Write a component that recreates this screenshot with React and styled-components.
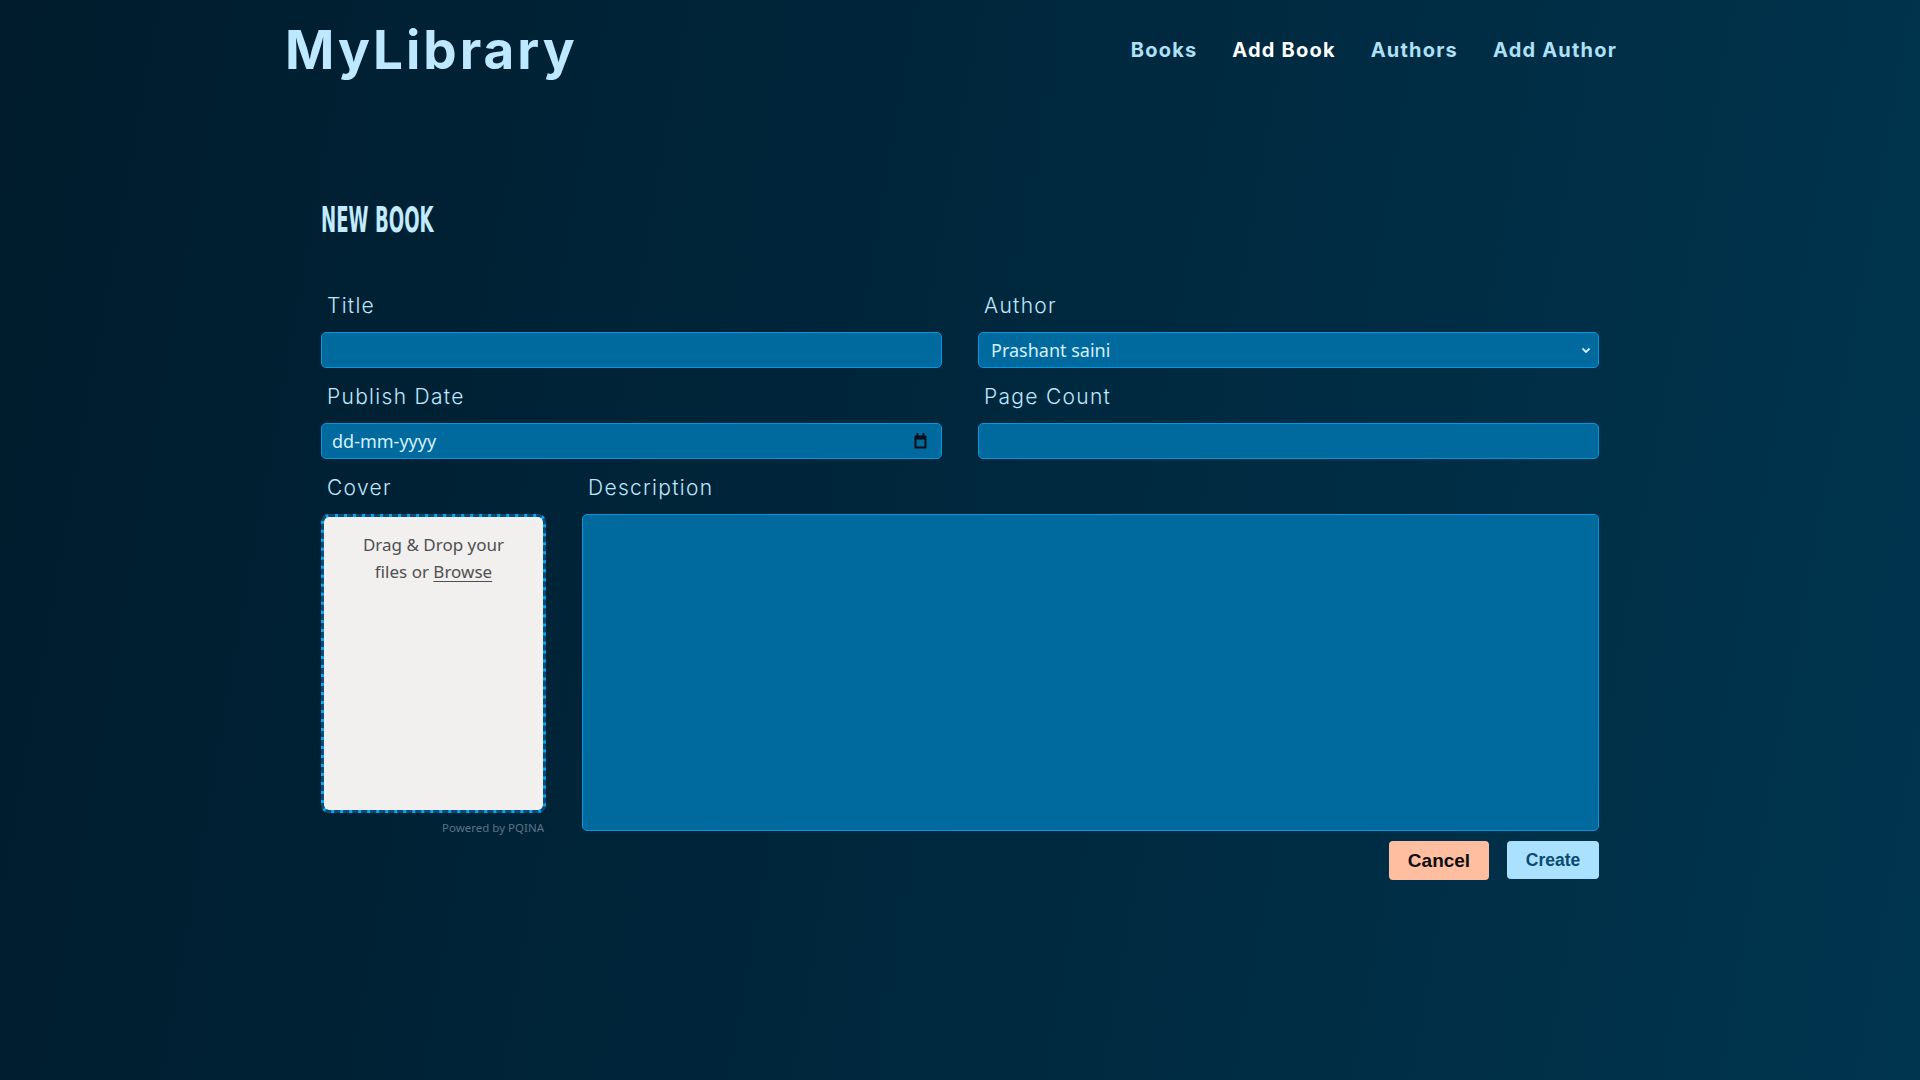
import React from 'react'
import styled, { createGlobalStyle } from 'styled-components'

const GlobalStyle = createGlobalStyle`
    * {
        box-sizing: border-box;
    }
    body {
        margin: 0;
        min-height: 100vh;
        background: linear-gradient(100deg, #001c2d 0%, #00263b 45%, #00354f 100%);
        font-family: Inter, 'Noto Sans', sans-serif;
    }
`

const authors = ['Prashant saini']

const App = () => {
    return (
        <>
            <GlobalStyle />
            <Header>
                <Logo>MyLibrary</Logo>
                <Nav>
                    <NavLink>Books</NavLink>
                    <NavLink active>Add Book</NavLink>
                    <NavLink>Authors</NavLink>
                    <NavLink>Add Author</NavLink>
                </Nav>
            </Header>
            <Main>
                <PageTitle>
                    <span>New Book</span>
                </PageTitle>
                <Form onSubmit={(e) => e.preventDefault()}>
                    <Row>
                        <Field>
                            <Label>Title</Label>
                            <Input type="text" />
                        </Field>
                        <Field>
                            <Label>Author</Label>
                            <InputBox>
                                <Select defaultValue={authors[0]}>
                                    {authors.map((a) => (
                                        <option key={a}>{a}</option>
                                    ))}
                                </Select>
                                <svg width="10" height="7" viewBox="0 0 10 7">
                                    <path
                                        d="M1.5 1.5 L5 5 L8.5 1.5"
                                        fill="none"
                                        stroke="#d6f0ff"
                                        strokeWidth="1.8"
                                    />
                                </svg>
                            </InputBox>
                        </Field>
                    </Row>
                    <Row>
                        <Field>
                            <Label>Publish Date</Label>
                            <InputBox calendar>
                                <BareInput type="text" placeholder="dd-mm-yyyy" />
                                <svg width="13" height="16" viewBox="0 0 13 16">
                                    <rect x="0.5" y="2.5" width="12" height="13" rx="1" fill="#0b0f14" />
                                    <rect x="2.5" y="6.5" width="8" height="7" fill="#00699e" />
                                    <rect x="2.6" y="0" width="1.8" height="3.5" fill="#0b0f14" />
                                    <rect x="8.6" y="0" width="1.8" height="3.5" fill="#0b0f14" />
                                </svg>
                            </InputBox>
                        </Field>
                        <Field>
                            <Label>Page Count</Label>
                            <Input type="number" />
                        </Field>
                    </Row>
                    <CoverRow>
                        <Field>
                            <Label>Cover</Label>
                            <DropZone>
                                <DropLine>Drag &amp; Drop your</DropLine>
                                <DropLine>
                                    files or <Browse>Browse</Browse>
                                </DropLine>
                            </DropZone>
                            <Credit>Powered by PQINA</Credit>
                        </Field>
                        <Field>
                            <Label>Description</Label>
                            <TextArea />
                            <Actions>
                                <Button cancel>Cancel</Button>
                                <Button>Create</Button>
                            </Actions>
                        </Field>
                    </CoverRow>
                </Form>
            </Main>
        </>
    )
}

const Header = styled.header`
    max-width: 1350px;
    height: 100px;
    margin: 0 auto;
    padding-right: 18px;
    display: flex;
    align-items: center;
    justify-content: space-between;
`

const Logo = styled.h1`
    margin: 0;
    font-family: Inter, 'Noto Sans', sans-serif;
    font-size: 53px;
    font-weight: 700;
    letter-spacing: 3px;
    color: #bde8ff;
`

const Nav = styled.nav`
    display: flex;
    gap: 35px;
`

const NavLink = styled.a`
    font-family: Inter, 'Noto Sans', sans-serif;
    font-size: 20px;
    font-weight: 700;
    letter-spacing: 1.2px;
    color: ${({ active }) => (active ? '#ffffff' : '#aee0f8')};
    cursor: pointer;
`

const Main = styled.main`
    width: 1278px;
    margin: 0 auto;
    padding-top: 100px;
`

const PageTitle = styled.h2`
    margin: 0 0 54px;
    height: 40px;
    font-family: 'DejaVu Sans Condensed', 'DejaVu Sans', sans-serif;
    font-size: 36px;
    font-weight: 700;
    line-height: 40px;
    text-transform: uppercase;
    color: #c2ebff;
    span {
        display: inline-block;
        transform: scaleX(0.56);
        transform-origin: left center;
    }
`

const Form = styled.form`
    display: flex;
    flex-direction: column;
`

const Row = styled.div`
    display: grid;
    grid-template-columns: 1fr 1fr;
    column-gap: 36px;
`

const CoverRow = styled.div`
    display: grid;
    grid-template-columns: 225px 1fr;
    column-gap: 36px;
`

const Field = styled.div`
    display: flex;
    flex-direction: column;
    padding-bottom: 17px;
`

const Label = styled.label`
    padding-left: 6px;
    margin-bottom: 14px;
    font-family: Inter, 'Noto Sans', sans-serif;
    font-size: 21px;
    font-weight: 300;
    letter-spacing: 1.3px;
    line-height: 24px;
    color: #bde8ff;
`

const Input = styled.input`
    height: 36px;
    padding: 0 11px;
    border: 1px solid #0597de;
    border-radius: 5px;
    background-color: #00699e;
    color: #d6f0ff;
    font-family: 'Noto Sans', sans-serif;
    font-size: 18px;
    outline: none;
    appearance: none;
    -moz-appearance: textfield;
    &::-webkit-inner-spin-button {
        display: none;
    }
`

const InputBox = styled.div`
    height: 36px;
    display: flex;
    align-items: center;
    gap: 8px;
    padding: 0 ${({ calendar }) => (calendar ? '14px' : '7px')} 0 0;
    border: 1px solid #0597de;
    border-radius: 5px;
    background-color: #00699e;
    svg {
        flex-shrink: 0;
    }
`

const BareInput = styled.input`
    flex: 1;
    min-width: 0;
    height: 100%;
    padding: 0 0 0 10px;
    border: none;
    background: transparent;
    color: #d6f0ff;
    font-family: 'Noto Sans', sans-serif;
    font-size: 18px;
    outline: none;
    &::placeholder {
        color: #d6f0ff;
        opacity: 1;
    }
`

const Select = styled.select`
    flex: 1;
    min-width: 0;
    height: 100%;
    padding: 0 0 0 12px;
    border: none;
    background: transparent;
    color: #d6f0ff;
    font-family: 'Noto Sans', sans-serif;
    font-size: 18px;
    outline: none;
    appearance: none;
    option {
        color: #000;
    }
`

const DropZone = styled.div`
    height: 299px;
    padding: 14px 12px;
    display: flex;
    flex-direction: column;
    align-items: center;
    border: 3px dashed #0b4a72;
    border-radius: 8px;
    background: linear-gradient(#f1f0ef, #f1f0ef) padding-box, #00a8f5 border-box;
`

const DropLine = styled.p`
    margin: 0;
    font-family: 'Noto Sans', sans-serif;
    font-size: 17px;
    line-height: 27px;
    color: #4f4f4f;
`

const Browse = styled.span`
    text-decoration: underline;
    text-underline-offset: 3px;
    cursor: pointer;
`

const Credit = styled.span`
    margin-top: 7px;
    padding-right: 2px;
    align-self: flex-end;
    font-family: 'Noto Sans', sans-serif;
    font-size: 11.5px;
    color: #5a7486;
`

const TextArea = styled.textarea`
    height: 317px;
    resize: none;
    border: 1px solid #0597de;
    border-radius: 5px;
    background-color: #00699e;
    color: #d6f0ff;
    outline: none;
`

const Actions = styled.div`
    display: flex;
    justify-content: flex-end;
    align-items: flex-start;
    gap: 18px;
    margin-top: 10px;
`

const Button = styled.button`
    height: ${({ cancel }) => (cancel ? '39px' : '38px')};
    width: ${({ cancel }) => (cancel ? '100px' : '92px')};
    border: none;
    border-radius: 4px;
    background-color: ${({ cancel }) => (cancel ? '#ffbe9f' : '#a9e1ff')};
    color: ${({ cancel }) => (cancel ? '#0d0d0d' : '#0a4a6e')};
    font-family: 'Liberation Sans', Arial, sans-serif;
    font-size: ${({ cancel }) => (cancel ? '19px' : '17.5px')};
    font-weight: 700;
    cursor: pointer;
`

export default App
